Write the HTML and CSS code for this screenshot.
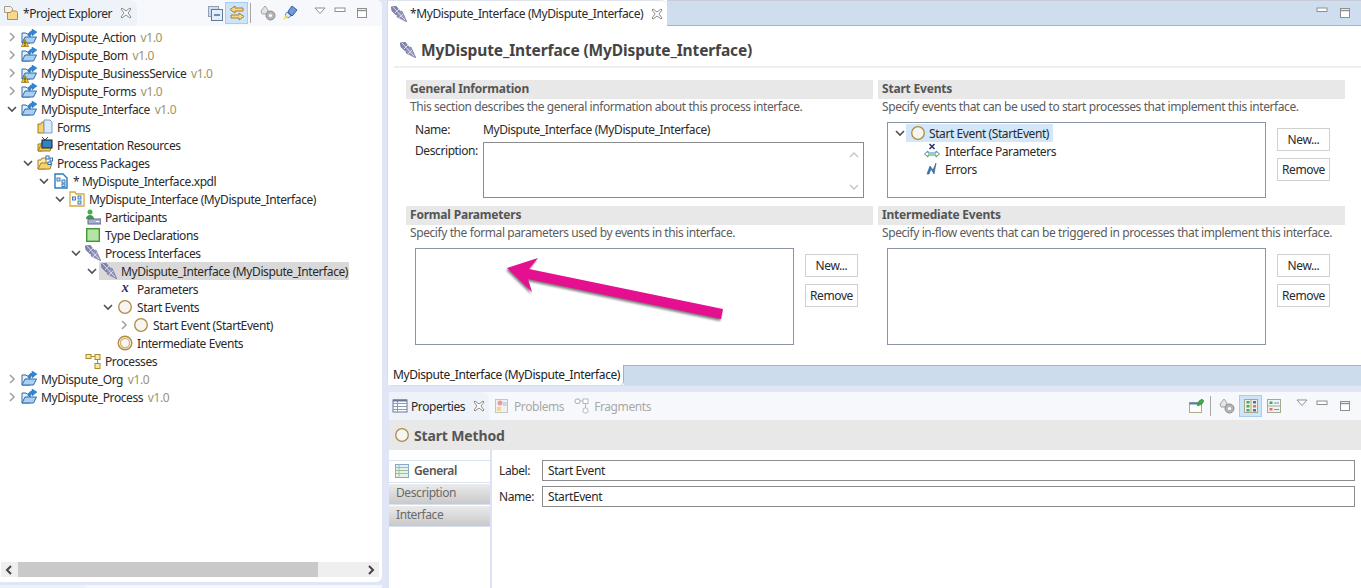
FILE: index.html
```html
<!DOCTYPE html>
<html lang="en">
<head>
<meta charset="utf-8">
<title>MyDispute_Interface</title>
<link rel="stylesheet" href="styles.css">
</head>
<body>
<svg class="defs" aria-hidden="true">
  <symbol id="chev-r" viewBox="0 0 10 10"><path d="M3 1l4 4-4 4" fill="none" stroke="#a0a0a0" stroke-width="1.5"/></symbol>
  <symbol id="chev-d" viewBox="0 0 10 10"><path d="M1 3l4 4 4-4" fill="none" stroke="#505050" stroke-width="1.6"/></symbol>
  <symbol id="close" viewBox="0 0 12 12"><path d="M2 1l4 3 4-3 1 1-3 4 3 4-1 1-4-3-4 3-1-1 3-4-3-4z" fill="#fff" stroke="#8b8b8b"/></symbol>
  <symbol id="explorer" viewBox="0 0 16 16"><path d="M1.500 1.500h6l2 2v4h-8z" fill="#f1f1f1" stroke="#a89a84"/><path d="M4.500 7.500h3l1-1.500h5l1 1.500v7h-10z" fill="#f8d98a" stroke="#b68d45"/></symbol>
  <symbol id="project" viewBox="0 0 16 16"><path d="M1 4h4l1 1h3v9H1z" fill="#e5eff9" stroke="#2f6aa8"/><path d="M1 14l3-6h11.500l-3 6z" fill="#a8d0f0" stroke="#2f6aa8"/><path d="M7 7c0-3 2-5 4-5V0l5 3-5 4V5c-1 0-2 1-2 2z" fill="#2e86d6" stroke="#1f5f9f" stroke-width=".4"/></symbol>
  <symbol id="warn" viewBox="0 0 8 8"><path d="M4 .5L7.800 7.500H.2z" fill="#f5c623" stroke="#7d6200" stroke-width=".6"/><path d="M4 2.500v3M4 6v1" stroke="#222" stroke-width="1"/></symbol>
  <symbol id="forms" viewBox="0 0 16 16"><path d="M1 5h3l1-2h2v11H1z" fill="#f6d36c" stroke="#9c7a22"/><path d="M5 14l3-5v5z" fill="#e9b93f"/><path d="M7 1h6l2 2v11H7z" fill="#dbe9f8" stroke="#7d9fc6"/></symbol>
  <symbol id="present" viewBox="0 0 16 16"><path d="M5 0l3 3 3-3" fill="none" stroke="#444"/><path d="M1 7h3l1-2v9H1z" fill="#f6d36c" stroke="#9c7a22"/><path d="M1 14l3-6h11l-2 6z" fill="#f4c94f" stroke="#9c7a22"/><rect x="5" y="3" width="10" height="8" fill="#2d85c5" stroke="#222"/></symbol>
  <symbol id="ppack" viewBox="0 0 16 16"><path d="M1 5h3l1-2h4v11H1z" fill="#fbe9aa" stroke="#a47f24"/><path d="M1 14l3-6h11l-2 6z" fill="#f6d36c" stroke="#a47f24"/><g fill="#fff" stroke="#2f6fb3"><rect x="9" y="1" width="3" height="3"/><rect x="13" y="3" width="2.500" height="3"/><rect x="11" y="7" width="3" height="2.500"/></g></symbol>
  <symbol id="xpdl" viewBox="0 0 16 16"><path d="M2 1h8l4 4v10H2z" fill="#fff" stroke="#2b78c2" stroke-width="1.400"/><g fill="#dbe9f8" stroke="#2b6fb3" stroke-width=".9"><rect x="4" y="5" width="3" height="3"/><rect x="9" y="7" width="3" height="3"/><rect x="9" y="11" width="3" height="2.500"/></g></symbol>
  <symbol id="pkg" viewBox="0 0 16 16"><path d="M1 15V1h5l1 2h8v12z" fill="#fff" stroke="#d8a93a" stroke-width="1.300"/><g fill="#dbe9f8" stroke="#2b6fb3" stroke-width=".9"><rect x="3.500" y="6" width="3" height="3"/><rect x="9" y="5" width="3" height="3"/><rect x="9" y="10" width="3" height="3"/></g></symbol>
  <symbol id="part" viewBox="0 0 16 16"><circle cx="5" cy="3" r="2.500" fill="#3fb14a"/><path d="M1 10c0-3 2-4 4-4s3 1 4 3v1z" fill="#3c9c46"/><rect x="3" y="10" width="13" height="5" fill="#aab2d0" stroke="#60688c"/><path d="M11 12.500h3" stroke="#fff"/></symbol>
  <symbol id="type" viewBox="0 0 16 16"><rect x="1.700" y="1.700" width="12.600" height="12.600" fill="#b5e3a6" stroke="#3e9a34" stroke-width="1.400"/></symbol>
  <symbol id="iface" viewBox="0 0 16 16"><path d="M0 1l5-1 4 5-4 4-4-4z" fill="#8283ae" stroke="#67688f" stroke-width=".5"/><path d="M6 6l5-1 5 11-10-5z" fill="#9192ba" stroke="#6f7097" stroke-width=".5"/><path d="M2 1l12 13M8 3L4 7M12 8l-4 4" stroke="#eeeef6" stroke-width=".8" fill="none"/></symbol>
  <symbol id="start" viewBox="0 0 16 16"><circle cx="8" cy="8" r="6.300" fill="#f5f5f2" stroke="#b08b42" stroke-width="1.300"/></symbol>
  <symbol id="inter" viewBox="0 0 16 16"><circle cx="8" cy="8" r="6.800" fill="#f5f5f2" stroke="#b08b42" stroke-width="1.400"/><circle cx="8" cy="8" r="4.600" fill="none" stroke="#d4b06a" stroke-width="1.200"/></symbol>
  <symbol id="procs" viewBox="0 0 16 16"><g fill="#fbe8a6" stroke="#a98a33"><rect x="1" y="1.500" width="5" height="4"/><rect x="10" y="1.500" width="5" height="5"/><rect x="10" y="10.500" width="5" height="5"/></g><path d="M6 3.500h4M12.500 6.500v4" stroke="#a98a33"/></symbol>
  <symbol id="iparams" viewBox="0 0 16 16"><path d="M5.500 1l5 5M10.500 1l-5 5" stroke="#2c2e6f" stroke-width="1.500" fill="none"/><path d="M.5 11L4 8v2h8V8l3.500 3" fill="none" stroke="#3f86cc"/><path d="M.5 11L4 14v-2h8v2l3.500-3" fill="none" stroke="#43a047"/></symbol>
  <symbol id="errors" viewBox="0 0 16 16"><path d="M3 13l3-8 3 4 3-7-2 11-3-5-2 5z" fill="#3f74ad" stroke="#2c5f95" stroke-width=".6"/></symbol>
  <symbol id="collapse" viewBox="0 0 16 16"><rect x="1.500" y="1.500" width="10" height="10" fill="#cfdcec" stroke="#8ea3bb"/><rect x="4.500" y="4.500" width="11" height="11" fill="#e7edf5" stroke="#5f7a99"/><path d="M7 10h6" stroke="#2b5a8f" stroke-width="1.300"/></symbol>
  <symbol id="link" viewBox="0 0 16 16"><path d="M6 1L1 4.500 6 8V6h8V3H6z" fill="#f5d78a" stroke="#a9812d"/><path d="M10 8l5 3.500-5 3.500v-2H2v-3h8z" fill="#f5d78a" stroke="#a9812d"/></symbol>
  <symbol id="gear" viewBox="0 0 16 16"><path d="M5 1l3 4-1 4H2L1 6z" fill="#e4e4e4" stroke="#a5a5a5"/><circle cx="10.500" cy="10.500" r="4.500" fill="#b4b4b4" stroke="#8c8c8c"/><circle cx="10.500" cy="10.500" r="1.600" fill="#fff"/></symbol>
  <symbol id="flash" viewBox="0 0 16 16"><path d="M10 1l5 4-4 5-1 1-4-4 1-2z" fill="#6f9bdc" stroke="#305f9e"/><path d="M5 7l4 4-3 2-3-3z" fill="#dbe9f8" stroke="#305f9e" stroke-width=".7"/><path d="M1 15l2-5 3 3z" fill="#f7e26b"/></symbol>
  <symbol id="menu" viewBox="0 0 12 8"><path d="M1 1h10L6 6.500z" fill="#fff" stroke="#8f8f8f"/></symbol>
  <symbol id="min" viewBox="0 0 12 6"><rect x="1" y="1" width="10" height="3.500" fill="#fff" stroke="#8f8f8f"/></symbol>
  <symbol id="max" viewBox="0 0 12 12"><rect x="1.500" y="1.500" width="9" height="9" fill="#fff" stroke="#8f8f8f"/><path d="M1.500 3.500h9" stroke="#8f8f8f" stroke-width="1.400"/></symbol>
  <symbol id="props" viewBox="0 0 16 16"><rect x="1" y="2" width="14" height="12" fill="#fff" stroke="#66799a"/><path d="M1 5.500h14M1 8.500h14M1 11.500h14M5.500 2v12" stroke="#8c9cb7"/><path d="M1 2.500h14" stroke="#66799a" stroke-width="2"/></symbol>
  <symbol id="problems" viewBox="0 0 16 16"><rect x="1.500" y="1.500" width="12" height="13" fill="#f1f1f1" stroke="#c4c4c4"/><circle cx="6" cy="5" r="2.500" fill="#ea9aa0"/><rect x="3" y="9" width="4" height="4" fill="#f3d68c"/><rect x="9" y="4" width="4" height="4" fill="#cfd8e8"/></symbol>
  <symbol id="frag" viewBox="0 0 16 16"><g fill="#fff" stroke="#84aee0"><rect x="1" y="1" width="5" height="4.500" rx="2"/></g><g fill="#fff" stroke="#b7b7b7"><rect x="9" y="1" width="5" height="4.500"/><rect x="9" y="10" width="5" height="5" rx="2"/></g><path d="M6 3h3M11.500 5.500V10" stroke="#b7b7b7"/></symbol>
  <symbol id="general" viewBox="0 0 14 14"><rect x=".5" y=".5" width="13" height="13" fill="#e8f1e6" stroke="#84a8d4"/><path d="M.5 3.500h13M.5 6.500h13M.5 9.500h13M4 .5v13" stroke="#9cc0a0"/></symbol>
  <symbol id="pin" viewBox="0 0 16 16"><rect x="1.500" y="4.500" width="12" height="10" fill="#fff" stroke="#b1a985"/><path d="M1.500 5.500h12" stroke="#4e7fbe" stroke-width="2"/><path d="M9 7l2-4 3-2 2 2-2 3-4 2z" fill="#3fa84a" stroke="#2c7b35" stroke-width=".5"/></symbol>
  <symbol id="tree-a" viewBox="0 0 16 16"><rect x="1.500" y="1.500" width="13" height="13" fill="#eef1e4" stroke="#a7a88f"/><path d="M8 1.500v13" stroke="#a7a88f"/><g fill="#3faa5a"><rect x="3.500" y="3" width="3" height="2.500"/><rect x="3.500" y="7" width="3" height="2.500"/><rect x="3.500" y="11" width="3" height="2.500"/></g><g fill="#3a77bd"><rect x="10" y="3" width="3" height="2.500"/><rect x="10" y="11" width="3" height="2.500"/></g><rect x="10" y="7" width="3" height="2.500" fill="#e8705f"/></symbol>
  <symbol id="tree-b" viewBox="0 0 16 16"><rect x="1.500" y="1.500" width="13" height="13" fill="#eef4f4" stroke="#a7a88f"/><path d="M1.500 8h13" stroke="#a7a88f"/><rect x="3.500" y="3.500" width="3" height="2.500" fill="#3faa5a"/><rect x="3.500" y="10" width="3" height="2.500" fill="#e8705f"/><path d="M8 5h5M8 11.500h5" stroke="#7c93b0"/></symbol>
</svg>

<div class="workbench">
  <aside class="explorer">
    <div class="pane">
      <div class="viewbar">
        <div class="viewtab viewtab-main">
          <svg class="ico"><use href="#explorer"/></svg>
          <span class="tablabel">*Project Explorer</span>
          <svg class="closeico"><use href="#close"/></svg>
        </div>
        <div class="toolbar toolbar-left">
          <svg class="ico"><use href="#collapse"/></svg>
          <span class="toggled"><svg class="ico"><use href="#link"/></svg></span>
          <span class="tsep"></span>
          <svg class="ico tool-gear"><use href="#gear"/></svg>
          <svg class="ico"><use href="#flash"/></svg>
          <svg class="tmenu"><use href="#menu"/></svg>
          <svg class="tmin"><use href="#min"/></svg>
          <svg class="tmax"><use href="#max"/></svg>
        </div>
      </div>
      <div class="tree">
        <div class="row l0"><svg class="chev"><use href="#chev-r"/></svg><span class="node"><span class="stack"><svg class="ico"><use href="#project"/></svg><svg class="warn"><use href="#warn"/></svg></span><span class="lbl">MyDispute_Action <em>v1.0</em></span></span></div>
        <div class="row l0"><svg class="chev"><use href="#chev-r"/></svg><span class="node"><svg class="ico"><use href="#project"/></svg><span class="lbl">MyDispute_Bom <em>v1.0</em></span></span></div>
        <div class="row l0"><svg class="chev"><use href="#chev-r"/></svg><span class="node"><span class="stack"><svg class="ico"><use href="#project"/></svg><svg class="warn"><use href="#warn"/></svg></span><span class="lbl">MyDispute_BusinessService <em>v1.0</em></span></span></div>
        <div class="row l0"><svg class="chev"><use href="#chev-r"/></svg><span class="node"><svg class="ico"><use href="#project"/></svg><span class="lbl">MyDispute_Forms <em>v1.0</em></span></span></div>
        <div class="row l0"><svg class="chev"><use href="#chev-d"/></svg><span class="node"><svg class="ico"><use href="#project"/></svg><span class="lbl">MyDispute_Interface <em>v1.0</em></span></span></div>
        <div class="row l1"><span class="chev"></span><span class="node"><svg class="ico"><use href="#forms"/></svg><span class="lbl">Forms</span></span></div>
        <div class="row l1"><span class="chev"></span><span class="node"><svg class="ico"><use href="#present"/></svg><span class="lbl">Presentation Resources</span></span></div>
        <div class="row l1"><svg class="chev"><use href="#chev-d"/></svg><span class="node"><svg class="ico"><use href="#ppack"/></svg><span class="lbl">Process Packages</span></span></div>
        <div class="row l2"><svg class="chev"><use href="#chev-d"/></svg><span class="node"><svg class="ico"><use href="#xpdl"/></svg><span class="lbl">* MyDispute_Interface.xpdl</span></span></div>
        <div class="row l3"><svg class="chev"><use href="#chev-d"/></svg><span class="node"><svg class="ico"><use href="#pkg"/></svg><span class="lbl">MyDispute_Interface (MyDispute_Interface)</span></span></div>
        <div class="row l4"><span class="chev"></span><span class="node"><svg class="ico"><use href="#part"/></svg><span class="lbl">Participants</span></span></div>
        <div class="row l4"><span class="chev"></span><span class="node"><svg class="ico"><use href="#type"/></svg><span class="lbl">Type Declarations</span></span></div>
        <div class="row l4"><svg class="chev"><use href="#chev-d"/></svg><span class="node"><svg class="ico"><use href="#iface"/></svg><span class="lbl">Process Interfaces</span></span></div>
        <div class="row l5"><svg class="chev"><use href="#chev-d"/></svg><span class="node node-sel"><svg class="ico"><use href="#iface"/></svg><span class="lbl">MyDispute_Interface (MyDispute_Interface)</span></span></div>
        <div class="row l6"><span class="chev"></span><span class="node"><span class="ico xvar">x</span><span class="lbl">Parameters</span></span></div>
        <div class="row l6"><svg class="chev"><use href="#chev-d"/></svg><span class="node"><svg class="ico"><use href="#start"/></svg><span class="lbl">Start Events</span></span></div>
        <div class="row l7"><svg class="chev"><use href="#chev-r"/></svg><span class="node"><svg class="ico"><use href="#start"/></svg><span class="lbl">Start Event (StartEvent)</span></span></div>
        <div class="row l6"><span class="chev"></span><span class="node"><svg class="ico"><use href="#inter"/></svg><span class="lbl">Intermediate Events</span></span></div>
        <div class="row l4"><span class="chev"></span><span class="node"><svg class="ico"><use href="#procs"/></svg><span class="lbl">Processes</span></span></div>
        <div class="row l0"><svg class="chev"><use href="#chev-r"/></svg><span class="node"><svg class="ico"><use href="#project"/></svg><span class="lbl">MyDispute_Org <em>v1.0</em></span></span></div>
        <div class="row l0"><svg class="chev"><use href="#chev-r"/></svg><span class="node"><svg class="ico"><use href="#project"/></svg><span class="lbl">MyDispute_Process <em>v1.0</em></span></span></div>
      </div>
      <div class="hscroll">
        <svg class="sarrow" viewBox="0 0 10 10"><path d="M7 1L3 5l4 4" fill="none" stroke="#444" stroke-width="2"/></svg>
        <div class="strack"><div class="sthumb"></div></div>
        <svg class="sarrow" viewBox="0 0 10 10"><path d="M3 1l4 4-4 4" fill="none" stroke="#444" stroke-width="2"/></svg>
      </div>
    </div>
    <div class="mini"><div class="mini-tab"></div></div>
  </aside>

  <main class="main">
    <section class="editor">
      <div class="edbar">
        <div class="edtab">
          <svg class="ico"><use href="#iface"/></svg>
          <span class="edtab-label">*MyDispute_Interface (MyDispute_Interface)</span>
          <svg class="closeico"><use href="#close"/></svg>
        </div>
        <div class="edbar-fill">
          <svg class="tmin"><use href="#min"/></svg>
          <svg class="tmax"><use href="#max"/></svg>
        </div>
      </div>
      <div class="form-title">
        <svg class="ico"><use href="#iface"/></svg>
        <h1>MyDispute_Interface (MyDispute_Interface)</h1>
      </div>
      <div class="form-grid">
        <div class="sec">
          <h2>General Information</h2>
          <p>This section describes the general information about this process interface.</p>
          <div class="name-row"><span class="field-label">Name:</span><span>MyDispute_Interface (MyDispute_Interface)</span></div>
          <div class="desc-row">
            <span class="field-label">Description:</span>
            <div class="textarea">
              <svg class="sb sb-up" viewBox="0 0 10 6"><path d="M1 5l4-4 4 4" fill="none" stroke="#c8c8c8" stroke-width="1.500"/></svg>
              <svg class="sb sb-down" viewBox="0 0 10 6"><path d="M1 1l4 4 4-4" fill="none" stroke="#c8c8c8" stroke-width="1.500"/></svg>
            </div>
          </div>
        </div>
        <div class="sec">
          <h2>Start Events</h2>
          <p>Specify events that can be used to start processes that implement this interface.</p>
          <div class="listwrap">
            <div class="listbox listbox-short">
              <div class="erow"><svg class="chev"><use href="#chev-d"/></svg><span class="enode"><svg class="ico"><use href="#start"/></svg><span>Start Event (StartEvent)</span></span></div>
              <div class="erow erow-sub"><svg class="ico"><use href="#iparams"/></svg><span>Interface Parameters</span></div>
              <div class="erow erow-sub"><svg class="ico"><use href="#errors"/></svg><span>Errors</span></div>
            </div>
            <div class="btns"><button>New...</button><button>Remove</button></div>
          </div>
        </div>
        <div class="sec">
          <h2>Formal Parameters</h2>
          <p>Specify the formal parameters used by events in this interface.</p>
          <div class="listwrap">
            <div class="listbox listbox-tall">
              <svg class="arrow" viewBox="0 0 320 90">
                <path d="M91 19L122 9 113 20 307 60 305 70 112 30 116 43z" fill="#e5108f"/>
              </svg>
            </div>
            <div class="btns"><button>New...</button><button>Remove</button></div>
          </div>
        </div>
        <div class="sec">
          <h2>Intermediate Events</h2>
          <p>Specify in-flow events that can be triggered in processes that implement this interface.</p>
          <div class="listwrap">
            <div class="listbox listbox-tall"></div>
            <div class="btns"><button>New...</button><button>Remove</button></div>
          </div>
        </div>
      </div>
      <div class="pagebar"><div class="pagetab">MyDispute_Interface (MyDispute_Interface)</div><div class="pagefill"></div></div>
    </section>

    <section class="propsview">
      <div class="viewbar viewbar-props">
        <div class="viewtab viewtab-props">
          <svg class="ico"><use href="#props"/></svg>
          <span class="tablabel">Properties</span>
          <svg class="closeico"><use href="#close"/></svg>
        </div>
        <div class="subtab"><svg class="ico"><use href="#problems"/></svg><span>Problems</span></div>
        <div class="subtab"><svg class="ico"><use href="#frag"/></svg><span>Fragments</span></div>
        <div class="toolbar toolbar-props">
          <svg class="ico"><use href="#pin"/></svg>
          <span class="tsep"></span>
          <svg class="ico tool-gear"><use href="#gear"/></svg>
          <span class="toggled"><svg class="ico"><use href="#tree-a"/></svg></span>
          <svg class="ico"><use href="#tree-b"/></svg>
          <svg class="tmenu"><use href="#menu"/></svg>
          <svg class="tmin"><use href="#min"/></svg>
          <svg class="tmax"><use href="#max"/></svg>
        </div>
      </div>
      <div class="props-title"><svg class="ico"><use href="#start"/></svg><h2>Start Method</h2></div>
      <div class="props-body">
        <div class="ptabs">
          <div class="ptab ptab-on"><svg class="gico"><use href="#general"/></svg><span>General</span></div>
          <div class="ptab">Description</div>
          <div class="ptab">Interface</div>
        </div>
        <div class="pfields">
          <div class="pfield"><span class="plabel">Label:</span><div class="pinput">Start Event</div></div>
          <div class="pfield"><span class="plabel">Name:</span><div class="pinput">StartEvent</div></div>
        </div>
      </div>
    </section>
  </main>
</div>
</body>
</html>
```
FILE: styles.css
```css
* { box-sizing: border-box; }
html, body { margin: 0; padding: 0; height: 100%; overflow: hidden; }
body {
  background: #e0e6f6;
  font-family: "Noto Sans", "Open Sans", sans-serif;
  font-size: 12px;
  letter-spacing: -0.41px;
  color: #2a2a2a;
}
.defs { position: absolute; width: 0; height: 0; }
.workbench { display: flex; height: 588px; width: 1361px; }

.ico { width: 16px; height: 16px; flex: none; display: block; }
.closeico { width: 12px; height: 12px; flex: none; display: block; }

/* Explorer */
.explorer { width: 387px; flex: none; display: flex; flex-direction: column; }
.pane {
  width: 382px; height: 582px; background: #fff;
  border-radius: 0 6px 6px 0; display: flex; flex-direction: column;
}
.mini { margin-top: 3px; width: 382px; flex: 1; background: #f6f7fc; }
.mini-tab { width: 85px; height: 3px; background: #edf1f8; }

.viewbar { display: flex; align-items: center; height: 26px; background: #f6f8fc; flex: none; border-radius: 0 6px 0 0; }
.viewtab { display: flex; align-items: center; height: 100%; background: #eef2f9; border-radius: 0 8px 0 0; }
.viewtab-main { width: 137px; padding-left: 3px; }
.tablabel { margin-left: 3px; white-space: nowrap; }
.viewtab-main .tablabel { margin-left: 4px; }
.viewtab-main .closeico { margin-left: 8px; }

.toolbar { display: flex; align-items: center; height: 100%; margin-left: auto; }
.toggled {
  display: flex; align-items: center; justify-content: center;
  width: 23px; height: 22px; background: #cde4f9; border: 1px solid #a6cdf0;
}
.tsep { width: 1px; height: 20px; background: #a8a8a8; }
.tmenu { width: 12px; height: 8px; display: block; flex: none; }
.tmin { width: 12px; height: 6px; display: block; flex: none; }
.tmax { width: 12px; height: 12px; display: block; flex: none; }

.toolbar-left { width: 175px; }
.toolbar-left .toggled { margin-left: 2px; }
.toolbar-left .tsep { margin-left: 2px; }
.toolbar-left .tool-gear { margin-left: 9px; margin-right: 6px; }
.toolbar-left .tmenu { margin-left: 16px; margin-top: -4px; }
.toolbar-left .tmin { margin-left: 8px; margin-top: -6px; }
.toolbar-left .tmax { margin-left: 10px; }

.tree { flex: 1; padding-top: 2px; }
.row { display: flex; align-items: center; height: 18px; white-space: nowrap; }
.chev { width: 10px; height: 10px; margin: 0 2px; flex: none; display: block; }
.l0 { padding-left: 5px; }
.l1 { padding-left: 21px; }
.l2 { padding-left: 37px; }
.l3 { padding-left: 53px; }
.l4 { padding-left: 69px; }
.l5 { padding-left: 85px; }
.l6 { padding-left: 101px; }
.l7 { padding-left: 117px; }
.node { display: flex; align-items: center; height: 18px; padding-left: 2px; padding-right: 1px; }
.node-sel { background: #d9d9d9; }
.lbl { margin-left: 4px; }
.lbl em { font-style: normal; color: #9a9468; margin-left: 2px; }
.stack { position: relative; width: 16px; height: 16px; display: block; flex: none; }
.warn { position: absolute; left: 0; bottom: -2px; width: 8px; height: 8px; }
.xvar {
  font-family: "Liberation Serif", serif; font-style: italic; font-weight: bold;
  font-size: 14px; line-height: 14px; text-align: center; color: #2c2e6f;
}

.hscroll { height: 15px; margin: 0 3px 5px 1px; display: flex; align-items: center; background: #efefef; flex: none; }
.sarrow { width: 10px; height: 10px; margin: 0 3px; flex: none; }
.strack { flex: 1; height: 15px; padding-left: 1px; }
.sthumb { width: 300px; height: 100%; background: #c9c9c9; }

/* Main */
.main { flex: 1; min-width: 0; display: flex; flex-direction: column; }
.editor {
  height: 386px; background: #fff; display: flex; flex-direction: column;
  border-left: 1px solid #d9dde6; border-bottom: 1px solid #d9dde6;
  border-radius: 0 0 0 6px; flex: none;
}
.edbar { display: flex; height: 26px; flex: none; }
.edtab {
  width: 279px; display: flex; align-items: center; padding-left: 3px; background: #fff;
  border-radius: 0 6px 0 0; border-top: 1px solid #dfe3ec; white-space: nowrap;
}
.edtab-label { margin-left: 3px; }
.edtab .closeico { margin-left: 8px; }
.edbar-fill {
  flex: 1; display: flex; justify-content: flex-end; align-items: center;
  background: #cfdeee; border-top: 1px solid #c7cdd8; border-bottom: 1px solid #a6b3ca;
  padding-right: 10px;
}
.edbar-fill .tmin { margin-top: -7px; }
.edbar-fill .tmax { margin-left: 11px; }

.form-title {
  display: flex; align-items: center; height: 42px; margin-left: 6px; padding: 8px 0 0 6px;
  border-bottom: 2px solid #eee; flex: none;
}
.form-title h1 {
  margin: 0 0 0 5px; font-size: 15.500px; font-weight: 700; color: #444; letter-spacing: -0.13px; white-space: nowrap;
}
.form-grid {
  display: grid; grid-template-columns: 467px 467px; column-gap: 5px;
  grid-template-rows: 121px auto; row-gap: 5px; padding: 12px 0 0 18px; flex: 1;
}
.sec h2 {
  margin: 0; height: 19px; line-height: 18px; padding-left: 4px; background: #e8e8e8;
  font-size: 12px; font-weight: 700; color: #555; letter-spacing: -0.2px;
}
.sec p { margin: 0; height: 16px; line-height: 16px; padding-left: 4px; color: #5c5c5c; white-space: nowrap; }

.name-row { display: flex; height: 16px; line-height: 16px; margin: 7px 0 0 9px; }
.desc-row { display: flex; margin: 4px 0 0 9px; }
.field-label { width: 68px; flex: none; }
.textarea { position: relative; width: 381px; height: 56px; border: 1px solid #8c8c8c; background: #fff; }
.sb { position: absolute; right: 4px; width: 10px; height: 6px; }
.sb-up { top: 9px; }
.sb-down { bottom: 7px; }

.listwrap { display: flex; margin: 7px 0 0 9px; }
.listbox { position: relative; width: 379px; border: 1px solid #8b94a5; background: #fff; flex: none; padding-top: 1px; }
.listbox-short { height: 76px; }
.listbox-tall { height: 97px; }
.btns { display: flex; flex-direction: column; gap: 7px; margin: 6px 0 0 11px; }
.btns button {
  width: 53px; height: 23px; padding: 0; border: 1px solid #d0d0d0; background: #fff;
  font: inherit; letter-spacing: inherit; color: #2a2a2a;
}
.arrow {
  position: absolute; left: 0; top: 0; width: 320px; height: 90px; overflow: visible;
  filter: drop-shadow(-1px 2px 1px rgba(40, 40, 40, .6));
}

.erow { display: flex; align-items: center; height: 18px; padding-left: 7px; white-space: nowrap; }
.erow .chev { margin: 0; }
.enode { display: flex; align-items: center; height: 18px; width: 147px; margin-left: 1px; background: #d3e7f8; padding-left: 4px; gap: 3px; }
.erow-sub { padding-left: 36px; gap: 5px; }

.pagebar { display: flex; height: 20px; flex: none; }
.pagetab {
  width: 236px; background: #fff; padding-left: 5px; line-height: 20px; white-space: nowrap;
  border-right: 1px solid #9eb0c9; border-radius: 0 0 4px 0; color: #222;
}
.pagefill { flex: 1; background: #cddced; border-top: 1px solid #a6b3ca; }

/* Properties */
.propsview { flex: 1; margin: 6px 0 0 2px; background: #fff; display: flex; flex-direction: column; min-height: 0; }
.viewbar-props { height: 28px; background: #f7f8fc; border-radius: 0; }
.viewtab-props { width: 100px; padding-left: 3px; }
.viewtab-props .closeico { margin-left: 8px; }
.subtab { display: flex; align-items: center; gap: 4px; margin-left: 5px; color: #a8a8a8; }
.subtab + .subtab { margin-left: 10px; }
.toolbar-props { width: 173px; margin-left: auto; }
.toolbar-props .tsep { margin: 0 8px 0 6px; }
.toolbar-props .toggled { margin-left: 4px; }
.toolbar-props .toggled + .ico { margin-left: 4px; }
.toolbar-props .tmenu { margin-left: 14px; margin-top: -6px; }
.toolbar-props .tmin { margin-left: 8px; margin-top: -6px; }
.toolbar-props .tmax { margin-left: 11px; }

.props-title { display: flex; align-items: center; height: 30px; background: #e8e8e8; padding-left: 5px; flex: none; }
.props-title h2 { margin: 0 0 0 4px; font-size: 14px; font-weight: 700; color: #555; letter-spacing: -0.15px; }

.props-body { flex: 1; display: flex; min-height: 0; }
.ptabs { width: 103px; flex: none; padding-top: 10px; border-right: 2px solid #dbe3f3; height: 100%; }
.ptab {
  height: 21px; line-height: 17px; padding-left: 7px; margin-bottom: 1px; color: #6a6a6a;
  background: linear-gradient(#ebebeb, #c9c9c9); border-bottom: 1px solid #d9e1f1;
}
.ptab-on {
  display: flex; align-items: center; gap: 5px; height: 23px; padding: 0 0 2px 6px; background: #fff;
  border-top: 1px solid #dbe3f3; border-bottom: 1px solid #dbe3f3; font-weight: 600; color: #555;
}
.gico { width: 14px; height: 14px; display: block; flex: none; }
.pfields { flex: 1; padding: 10px 6px 0 7px; display: flex; flex-direction: column; gap: 5px; }
.pfield { display: flex; align-items: center; }
.plabel { width: 43px; flex: none; }
.pinput { flex: 1; height: 21px; line-height: 19px; border: 1px solid #8c8c8c; padding-left: 5px; }
```
